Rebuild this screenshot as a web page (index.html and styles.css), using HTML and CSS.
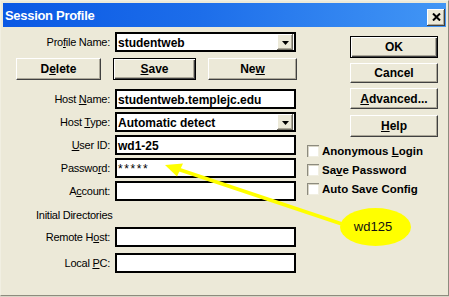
FILE: index.html
```html
<!DOCTYPE html>
<html>
<head>
<meta charset="utf-8">
<link rel="stylesheet" href="styles.css">
</head>
<body>
<div class="window">
  <div class="titlebar">
    <span class="title">Session Profile</span>
    <span class="close"><svg width="9" height="8" viewBox="0 0 9 8"><path d="M1 0.5 L8 7.5 M8 0.5 L1 7.5" stroke="#000" stroke-width="2" fill="none"/></svg></span>
  </div>
  <div class="content">
    <div class="form">
      <div class="row first">
        <span class="lbl">Pro<u>f</u>ile Name:</span>
        <div class="field combo"><span class="val">studentweb</span><span class="drop"><svg width="7" height="4" viewBox="0 0 7 4"><polygon points="0,0 7,0 3.5,4" fill="#000"/></svg></span></div>
      </div>
      <div class="btnrow">
        <div class="btn">D<u>e</u>lete</div>
        <div class="btn default"><u>S</u>ave</div>
        <div class="btn">Ne<u>w</u></div>
      </div>
      <div class="row gap">
        <span class="lbl">Host <u>N</u>ame:</span>
        <div class="field"><span class="val">studentweb.templejc.edu</span></div>
      </div>
      <div class="row">
        <span class="lbl">Host <u>T</u>ype:</span>
        <div class="field combo"><span class="val">Automatic detect</span><span class="drop"><svg width="7" height="4" viewBox="0 0 7 4"><polygon points="0,0 7,0 3.5,4" fill="#000"/></svg></span></div>
      </div>
      <div class="row">
        <span class="lbl"><u>U</u>ser ID:</span>
        <div class="field"><span class="val">wd1-25</span></div>
      </div>
      <div class="row">
        <span class="lbl">Passwo<u>r</u>d:</span>
        <div class="field"><span class="val pw">*****</span></div>
      </div>
      <div class="row">
        <span class="lbl">A<u>c</u>count:</span>
        <div class="field"></div>
      </div>
      <div class="section">Initial Directories</div>
      <div class="row remote">
        <span class="lbl">Remote H<u>o</u>st:</span>
        <div class="field"></div>
      </div>
      <div class="row local">
        <span class="lbl">Local <u>P</u>C:</span>
        <div class="field"></div>
      </div>
    </div>
    <div class="side">
      <div class="btn default sbtn ok">OK</div>
      <div class="btn sbtn cancel">Cancel</div>
      <div class="btn sbtn adv"><u>A</u>dvanced...</div>
      <div class="btn sbtn help"><u>H</u>elp</div>
      <div class="check c1"><span class="box"></span><span>Anonymous <u>L</u>ogin</span></div>
      <div class="check"><span class="box"></span><span>Sa<u>v</u>e Password</span></div>
      <div class="check"><span class="box"></span><span>Auto Save Config</span></div>
    </div>
  </div>
</div>
<svg class="note" width="449" height="297" viewBox="0 0 449 297">
  <line x1="342" y1="224" x2="176" y2="168.5" stroke="#ffff00" stroke-width="3.6"/>
  <polygon points="165,165 183,163.5 177,176.5" fill="#ffff00"/>
  <ellipse cx="375.5" cy="227" rx="35.5" ry="19" fill="#ffff00"/>
  <text x="373" y="230.5" text-anchor="middle" class="notetext">wd125</text>
</svg>
</body>
</html>
```
FILE: styles.css
```css
* { box-sizing: border-box; }
html, body { margin: 0; padding: 0; }
body {
  position: relative;
  width: 449px;
  height: 297px;
  overflow: hidden;
  background: #d8d5c6;
  font-family: "Liberation Sans", Arial, sans-serif;
  color: #000;
}
u { text-decoration: underline; text-underline-offset: 1px; }

.window {
  width: 449px;
  height: 296px;
  background: #ece9d8;
  border-top: 1px solid #f1efe2;
  border-left: 1px solid #f1efe2;
  border-right: 1px solid #8d8b7e;
  border-bottom: 1px solid #8d8b7e;
  padding: 2px;
}

.titlebar {
  height: 24px;
  display: flex;
  align-items: center;
  justify-content: space-between;
  padding: 0 1px 0 2px;
  background: linear-gradient(90deg, #0a58e4 0%, #1d6eea 45%, #4296f5 100%);
}
.title {
  color: #fff;
  font-weight: bold;
  font-size: 13px;
  letter-spacing: -0.3px;
  padding-top: 1px;
}
.close {
  width: 18px;
  height: 17px;
  margin-top: 4px;
  background: #ece9d8;
  box-shadow: inset -1px -1px #404040, inset 1px 1px #fff, inset -2px -2px #aca899;
  display: flex;
  align-items: center;
  justify-content: center;
}
.close svg { display: block; }

.content {
  display: flex;
  padding: 5px 0 0 13px;
}
.form {
  width: 281px;
  display: flex;
  flex-direction: column;
}
.row {
  display: flex;
  align-items: center;
  height: 20px;
  margin-top: 3px;
}
.row.first { margin-top: 0; }
.row.gap { margin-top: 9px; }
.row.remote { margin-top: 5px; }
.row.local { margin-top: 6px; }
.lbl {
  width: 94px;
  margin-right: 5px;
  text-align: right;
  font-size: 11px;
  letter-spacing: -0.25px;
  white-space: nowrap;
}
.field {
  width: 181px;
  height: 20px;
  border: 2px solid #000;
  background: #fff;
  display: flex;
  justify-content: space-between;
  align-items: flex-start;
  padding: 0 1px 0 1px;
}
.val {
  font-weight: bold;
  font-size: 12px;
  line-height: 13px;
  padding-top: 3px;
  white-space: nowrap;
}
.val.pw {
  font-weight: normal;
  letter-spacing: 1.6px;
  font-size: 12px;
}
.drop {
  width: 16px;
  height: 16px;
  background: #ece9d8;
  box-shadow: inset -1px -1px #716f64, inset 1px 1px #fff, inset -2px -2px #aca899;
  display: flex;
  align-items: center;
  justify-content: center;
}
.drop svg { display: block; margin-top: 1px; }

.btnrow {
  display: grid;
  grid-template-columns: 85px 83px 89px;
  column-gap: 12px;
  margin-top: 6px;
  height: 22px;
}
.btn {
  height: 22px;
  display: flex;
  align-items: center;
  justify-content: center;
  font-weight: bold;
  font-size: 12px;
  background: #ece9d8;
  border: 1px solid;
  border-color: #fff #404040 #404040 #fff;
  box-shadow: inset -1px -1px #aca899;
  white-space: nowrap;
}
.btn.default {
  border-color: #000;
  box-shadow: inset 1px 1px #fff, inset -1px -1px #404040, inset -2px -2px #aca899;
}

.section {
  margin-top: 7px;
  padding-left: 20px;
  font-size: 11px;
  line-height: 14px;
  letter-spacing: -0.25px;
}

.side {
  width: 131px;
  margin-left: 10px;
  display: flex;
  flex-direction: column;
  align-items: flex-end;
}
.sbtn { width: 88px; }
.ok { margin-top: 4px; height: 22px; }
.cancel { margin-top: 5px; height: 20px; }
.adv { margin-top: 5px; height: 21px; }
.help { margin-top: 6px; height: 22px; }

.check {
  align-self: stretch;
  display: flex;
  align-items: center;
  height: 19px;
  font-weight: bold;
  font-size: 11.5px;
  white-space: nowrap;
}
.check.c1 { margin-top: 4px; }
.box {
  width: 12px;
  height: 12px;
  margin-right: 3px;
  background: #fff;
  box-shadow: inset 1px 1px #8d8b7e, inset 2px 2px #d8d5c6, inset -1px -1px #f1efe2;
}

.note {
  position: absolute;
  left: 0;
  top: 0;
  pointer-events: none;
}
.notetext {
  font-family: "Liberation Sans", Arial, sans-serif;
  font-size: 13px;
  fill: #111;
}
```
